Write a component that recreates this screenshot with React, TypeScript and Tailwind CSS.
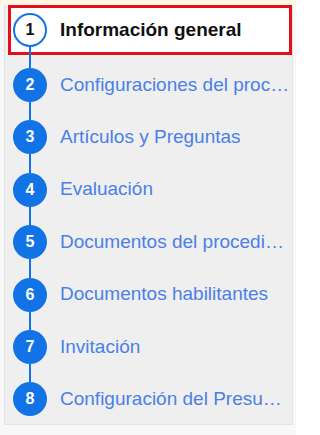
const steps = [
  'Información general',
  'Configuraciones del procedimiento',
  'Artículos y Preguntas',
  'Evaluación',
  'Documentos del procedimiento',
  'Documentos habilitantes',
  'Invitación',
  'Configuración del Presupuesto',
];

const BLUE = 'bg-[#1273e6]';

const Step = ({ n, label, active, last }: { n: number; label: string; active: boolean; last: boolean }) => (
  <div
    className={`flex items-stretch pl-[3px] ${
      active ? 'h-[50px] bg-white shadow-[inset_0_0_0_3px_#e3101b]' : 'h-[52.4px]'
    }`}
  >
    <div className="w-[38px] flex flex-col items-center shrink-0">
      <div className={`flex-1 w-[2px] ${active ? 'bg-transparent' : BLUE}`} />
      <div
        className={`w-[34px] h-[34px] shrink-0 rounded-full flex items-center justify-center text-[16px] font-bold ${
          active ? 'bg-white border-2 border-[#1273e6] text-[#111]' : 'bg-[#1273e6] text-white'
        }`}
      >
        {n}
      </div>
      <div className={`flex-1 w-[2px] ${last ? 'bg-transparent' : BLUE}`} />
    </div>
    <div
      className={`ml-[11px] flex items-center min-w-0 text-[19px] ${
        active ? 'font-bold text-[#111]' : 'text-[#4a7fe8]'
      }`}
    >
      <span className="truncate">{label}</span>
    </div>
  </div>
);

export default function App() {
  return (
    <div className="w-[296px] h-[435px] bg-[#f8f8f8] font-['Liberation_Sans',Arial,sans-serif] overflow-hidden">
      <div className="h-[5px] bg-[#fdf7e4]" />
      <div className="ml-[4px] w-[289px] h-[420px] bg-[#efefef] border-x border-b border-[#e3e3e3] pl-[3px] overflow-hidden">
        {steps.map((s, i) => (
          <div key={s}>
            {i === 1 && (
              <div className="h-[3.75px] pl-[3px] w-[41px] flex justify-center">
                <div className={`w-[2px] ${BLUE}`} />
              </div>
            )}
            <Step n={i + 1} label={s} active={i === 0} last={i === steps.length - 1} />
          </div>
        ))}
      </div>
    </div>
  );
}
